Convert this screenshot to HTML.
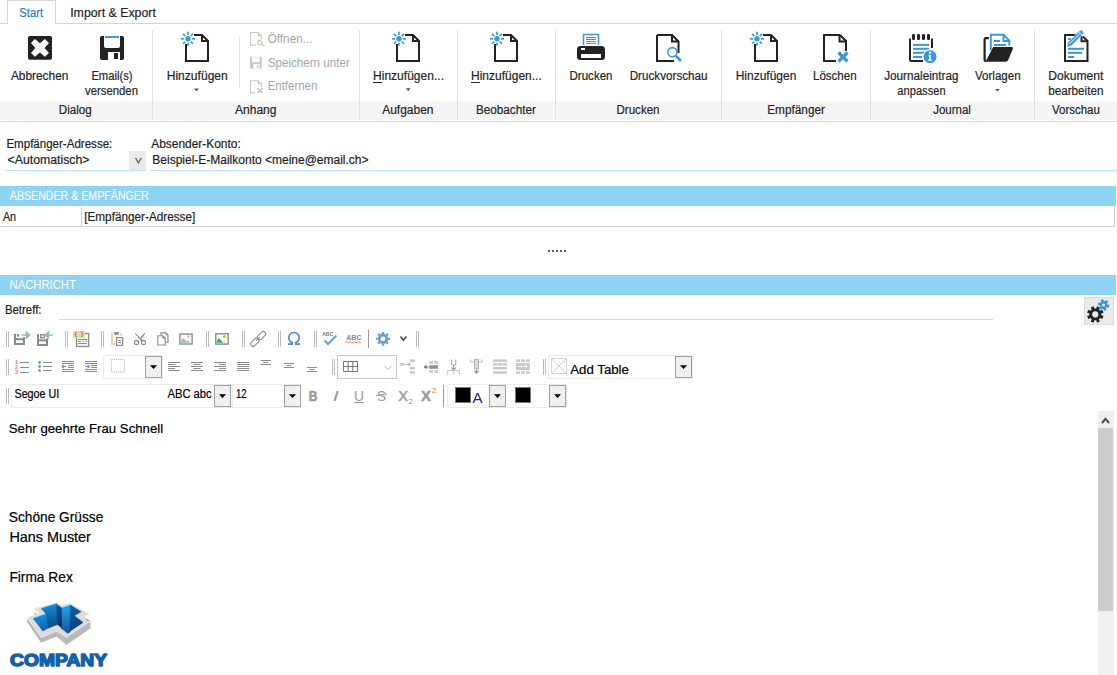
<!DOCTYPE html>
<html><head><meta charset="utf-8"><style>
html,body{margin:0;padding:0;background:#fff;overflow:hidden;}
svg{display:block;font-family:"Liberation Sans", sans-serif;}
</style></head><body>
<svg width="1117" height="675" viewBox="0 0 1117 675">
<line x1="0" y1="23.5" x2="7" y2="23.5" stroke="#d4d4d4" stroke-width="1"/>
<path d="M7.5 24 V0.5 H55.5 V24" fill="none" stroke="#d4d4d4"/>
<line x1="55" y1="23.5" x2="1117" y2="23.5" stroke="#d4d4d4" stroke-width="1"/>
<text x="19.3" y="17" font-size="12" fill="#2377d6" font-weight="normal" textLength="23.7" lengthAdjust="spacingAndGlyphs" stroke="#2377d6" stroke-width="0.15">Start</text>
<text x="70.2" y="17" font-size="12" fill="#262626" font-weight="normal" stroke="#262626" stroke-width="0.2" textLength="85.7" lengthAdjust="spacingAndGlyphs">Import &amp; Export</text>
<rect x="0" y="101" width="1117" height="19" fill="#f5f5f5"/>
<line x1="0" y1="121.5" x2="1117" y2="121.5" stroke="#d4d4d4" stroke-width="1"/>
<line x1="152.5" y1="30" x2="152.5" y2="120" stroke="#e1e1e1" stroke-width="1"/>
<line x1="359.5" y1="30" x2="359.5" y2="120" stroke="#e1e1e1" stroke-width="1"/>
<line x1="457.5" y1="30" x2="457.5" y2="120" stroke="#e1e1e1" stroke-width="1"/>
<line x1="555.5" y1="30" x2="555.5" y2="120" stroke="#e1e1e1" stroke-width="1"/>
<line x1="721.5" y1="30" x2="721.5" y2="120" stroke="#e1e1e1" stroke-width="1"/>
<line x1="870.5" y1="30" x2="870.5" y2="120" stroke="#e1e1e1" stroke-width="1"/>
<line x1="1034.5" y1="30" x2="1034.5" y2="120" stroke="#e1e1e1" stroke-width="1"/>
<line x1="239.5" y1="37" x2="239.5" y2="88" stroke="#e1e1e1" stroke-width="1"/>
<rect x="28" y="36" width="24" height="23.8" rx="1.8" fill="#222222"/>
<polygon points="31,42.9 34.9,39 39.9,43.3 44.9,39 48.9,42.9 44.6,47.9 48.9,52.9 44.9,56.8 39.9,52.5 34.9,56.8 31,52.9 35.3,47.9" fill="#fff"/>
<path d="M100 38 Q100 36 102 36 H122 Q124 36 124 38 V58 Q124 60 122 60 H102 Q100 60 100 58 Z" fill="#222222"/>
<path d="M104 36 H120 V46 Q120 48 118 48 H106 Q104 48 104 46 Z" fill="#fff"/>
<rect x="105" y="36" width="14" height="2" fill="#3a98d8"/>
<rect x="108" y="52" width="12" height="8" fill="#fff"/>
<rect x="114" y="53" width="4" height="6" fill="#222222"/>
<path d="M194 35 H202 L208 41 V61 H186 V44" fill="none" stroke="#222222" stroke-width="2"/>
<path d="M202 35 V41 H208" fill="none" stroke="#222222" stroke-width="2"/>
<circle cx="188" cy="38.8" r="2.7" fill="#3a98d8"/>
<line x1="191.90" y1="38.80" x2="195.00" y2="38.80" stroke="#3a98d8" stroke-width="1.7"/>
<line x1="190.76" y1="41.56" x2="192.95" y2="43.75" stroke="#3a98d8" stroke-width="1.7"/>
<line x1="188.00" y1="42.70" x2="188.00" y2="45.80" stroke="#3a98d8" stroke-width="1.7"/>
<line x1="185.24" y1="41.56" x2="183.05" y2="43.75" stroke="#3a98d8" stroke-width="1.7"/>
<line x1="184.10" y1="38.80" x2="181.00" y2="38.80" stroke="#3a98d8" stroke-width="1.7"/>
<line x1="185.24" y1="36.04" x2="183.05" y2="33.85" stroke="#3a98d8" stroke-width="1.7"/>
<line x1="188.00" y1="34.90" x2="188.00" y2="31.80" stroke="#3a98d8" stroke-width="1.7"/>
<line x1="190.76" y1="36.04" x2="192.95" y2="33.85" stroke="#3a98d8" stroke-width="1.7"/>
<path d="M405 35 H413 L419 41 V61 H397 V44" fill="none" stroke="#222222" stroke-width="2"/>
<path d="M413 35 V41 H419" fill="none" stroke="#222222" stroke-width="2"/>
<circle cx="399" cy="38.8" r="2.7" fill="#3a98d8"/>
<line x1="402.90" y1="38.80" x2="406.00" y2="38.80" stroke="#3a98d8" stroke-width="1.7"/>
<line x1="401.76" y1="41.56" x2="403.95" y2="43.75" stroke="#3a98d8" stroke-width="1.7"/>
<line x1="399.00" y1="42.70" x2="399.00" y2="45.80" stroke="#3a98d8" stroke-width="1.7"/>
<line x1="396.24" y1="41.56" x2="394.05" y2="43.75" stroke="#3a98d8" stroke-width="1.7"/>
<line x1="395.10" y1="38.80" x2="392.00" y2="38.80" stroke="#3a98d8" stroke-width="1.7"/>
<line x1="396.24" y1="36.04" x2="394.05" y2="33.85" stroke="#3a98d8" stroke-width="1.7"/>
<line x1="399.00" y1="34.90" x2="399.00" y2="31.80" stroke="#3a98d8" stroke-width="1.7"/>
<line x1="401.76" y1="36.04" x2="403.95" y2="33.85" stroke="#3a98d8" stroke-width="1.7"/>
<path d="M503 35 H511 L517 41 V61 H495 V44" fill="none" stroke="#222222" stroke-width="2"/>
<path d="M511 35 V41 H517" fill="none" stroke="#222222" stroke-width="2"/>
<circle cx="497" cy="38.8" r="2.7" fill="#3a98d8"/>
<line x1="500.90" y1="38.80" x2="504.00" y2="38.80" stroke="#3a98d8" stroke-width="1.7"/>
<line x1="499.76" y1="41.56" x2="501.95" y2="43.75" stroke="#3a98d8" stroke-width="1.7"/>
<line x1="497.00" y1="42.70" x2="497.00" y2="45.80" stroke="#3a98d8" stroke-width="1.7"/>
<line x1="494.24" y1="41.56" x2="492.05" y2="43.75" stroke="#3a98d8" stroke-width="1.7"/>
<line x1="493.10" y1="38.80" x2="490.00" y2="38.80" stroke="#3a98d8" stroke-width="1.7"/>
<line x1="494.24" y1="36.04" x2="492.05" y2="33.85" stroke="#3a98d8" stroke-width="1.7"/>
<line x1="497.00" y1="34.90" x2="497.00" y2="31.80" stroke="#3a98d8" stroke-width="1.7"/>
<line x1="499.76" y1="36.04" x2="501.95" y2="33.85" stroke="#3a98d8" stroke-width="1.7"/>
<path d="M763 35 H771 L777 41 V61 H755 V44" fill="none" stroke="#222222" stroke-width="2"/>
<path d="M771 35 V41 H777" fill="none" stroke="#222222" stroke-width="2"/>
<circle cx="757" cy="38.8" r="2.7" fill="#3a98d8"/>
<line x1="760.90" y1="38.80" x2="764.00" y2="38.80" stroke="#3a98d8" stroke-width="1.7"/>
<line x1="759.76" y1="41.56" x2="761.95" y2="43.75" stroke="#3a98d8" stroke-width="1.7"/>
<line x1="757.00" y1="42.70" x2="757.00" y2="45.80" stroke="#3a98d8" stroke-width="1.7"/>
<line x1="754.24" y1="41.56" x2="752.05" y2="43.75" stroke="#3a98d8" stroke-width="1.7"/>
<line x1="753.10" y1="38.80" x2="750.00" y2="38.80" stroke="#3a98d8" stroke-width="1.7"/>
<line x1="754.24" y1="36.04" x2="752.05" y2="33.85" stroke="#3a98d8" stroke-width="1.7"/>
<line x1="757.00" y1="34.90" x2="757.00" y2="31.80" stroke="#3a98d8" stroke-width="1.7"/>
<line x1="759.76" y1="36.04" x2="761.95" y2="33.85" stroke="#3a98d8" stroke-width="1.7"/>
<text x="10.9" y="80" font-size="12" fill="#262626" font-weight="normal" stroke="#262626" stroke-width="0.2" textLength="57.5" lengthAdjust="spacingAndGlyphs">Abbrechen</text>
<text x="91.4" y="80" font-size="12" fill="#262626" font-weight="normal" stroke="#262626" stroke-width="0.2" textLength="41.1" lengthAdjust="spacingAndGlyphs">Email(s)</text>
<text x="85" y="95" font-size="12" fill="#262626" font-weight="normal" stroke="#262626" stroke-width="0.2" textLength="53.0" lengthAdjust="spacingAndGlyphs">versenden</text>
<text x="166.7" y="79.5" font-size="12" fill="#262626" font-weight="normal" stroke="#262626" stroke-width="0.2" textLength="61.1" lengthAdjust="spacingAndGlyphs">Hinzufügen</text>
<path d="M194.0 88.5 H199.0 L196.5 91.2 Z" fill="#555"/>
<path d="M256 45.1 H250.6 V32.5 H258.2 L261.3 35.6 V39.5" fill="none" stroke="#c8c8c8" stroke-width="1.1"/>
<path d="M258.2 32.5 V35.6 H261.3" fill="none" stroke="#c8c8c8" stroke-width="1.1"/>
<circle cx="259.7" cy="42.5" r="2.1" fill="#fff" stroke="#c8c8c8" stroke-width="1.1"/>
<line x1="261.2" y1="44" x2="263.6" y2="46.4" stroke="#c8c8c8" stroke-width="1.3"/>
<text x="267.7" y="42.5" font-size="12" fill="#a6a6a6" font-weight="normal" textLength="44.8" lengthAdjust="spacingAndGlyphs">Öffnen...</text>
<path d="M250.1 56.8 H261.8 V68.5 H250.1 Z" fill="#c8c8c8"/>
<rect x="252" y="56.8" width="7.7" height="5.4" fill="#fff"/>
<rect x="253" y="57.5" width="5.7" height="0.8" fill="#e4e4e4"/>
<rect x="253.3" y="64.1" width="6.4" height="4.4" fill="#fff"/>
<rect x="257" y="65.1" width="1.5" height="2.5" fill="#c8c8c8"/>
<text x="267.7" y="66.5" font-size="12" fill="#a6a6a6" font-weight="normal" textLength="82.1" lengthAdjust="spacingAndGlyphs">Speichern unter</text>
<path d="M255.5 92.9 H250.6 V80.7 H258.2 L261.3 83.8 V87" fill="none" stroke="#c8c8c8" stroke-width="1.1"/>
<path d="M258.2 80.7 V83.8 H261.3" fill="none" stroke="#c8c8c8" stroke-width="1.1"/>
<path d="M257.4 88.1 L262.5 92.9 M262.5 88.1 L257.4 92.9" stroke="#c8c8c8" stroke-width="1.8"/>
<text x="267.7" y="90.3" font-size="12" fill="#a6a6a6" font-weight="normal" textLength="49.6" lengthAdjust="spacingAndGlyphs">Entfernen</text>
<text x="373" y="80" font-size="12" fill="#262626" font-weight="normal" stroke="#262626" stroke-width="0.2" textLength="71.0" lengthAdjust="spacingAndGlyphs">Hinzufügen...</text>
<line x1="373" y1="82.5" x2="382" y2="82.5" stroke="#262626" stroke-width="1"/>
<path d="M405.7 88.2 H410.7 L408.2 90.9 Z" fill="#555"/>
<text x="471" y="80" font-size="12" fill="#262626" font-weight="normal" stroke="#262626" stroke-width="0.2" textLength="70.8" lengthAdjust="spacingAndGlyphs">Hinzufügen...</text>
<line x1="471" y1="82.5" x2="480" y2="82.5" stroke="#262626" stroke-width="1"/>
<path d="M583.5 45 V34.5 H598.5 V45" fill="none" stroke="#3a98d8" stroke-width="1.5"/>
<line x1="586" y1="37.5" x2="596" y2="37.5" stroke="#3a98d8" stroke-width="1"/>
<line x1="586" y1="39.5" x2="596" y2="39.5" stroke="#3a98d8" stroke-width="1"/>
<line x1="586" y1="41.5" x2="596" y2="41.5" stroke="#3a98d8" stroke-width="1"/>
<line x1="586" y1="43.5" x2="596" y2="43.5" stroke="#3a98d8" stroke-width="1"/>
<rect x="577" y="46" width="28" height="14" rx="3.5" fill="#222222"/>
<rect x="581" y="54" width="20" height="4" fill="#fff"/>
<rect x="581" y="48" width="4" height="2" fill="#fff"/>
<path d="M657 35 H672 L678.5 41.5 V53 M674 61 H657 V35" fill="none" stroke="#222222" stroke-width="2"/>
<path d="M672 35 V41.5 H678.5" fill="none" stroke="#222222" stroke-width="2"/>
<circle cx="672.4" cy="52.2" r="4.6" fill="#fff" stroke="#3a98d8" stroke-width="1.6"/>
<line x1="676" y1="56" x2="681" y2="61" stroke="#3a98d8" stroke-width="2.6"/>
<text x="569.5" y="80" font-size="12" fill="#262626" font-weight="normal" stroke="#262626" stroke-width="0.2" textLength="43.0" lengthAdjust="spacingAndGlyphs">Drucken</text>
<text x="629.7" y="80" font-size="12" fill="#262626" font-weight="normal" stroke="#262626" stroke-width="0.2" textLength="77.9" lengthAdjust="spacingAndGlyphs">Druckvorschau</text>
<text x="735.7" y="80" font-size="12" fill="#262626" font-weight="normal" stroke="#262626" stroke-width="0.2" textLength="60.7" lengthAdjust="spacingAndGlyphs">Hinzufügen</text>
<path d="M840 35 L846 41 V51 M836 61 H824 V35 H840" fill="none" stroke="#222222" stroke-width="2"/>
<path d="M839.5 35 V41.5 H846" fill="none" stroke="#222222" stroke-width="2"/>
<path d="M838.5 52.5 L847.5 61.5 M847.5 52.5 L838.5 61.5" stroke="#3a98d8" stroke-width="3.2"/>
<text x="813" y="80" font-size="12" fill="#262626" font-weight="normal" stroke="#262626" stroke-width="0.2" textLength="43.6" lengthAdjust="spacingAndGlyphs">Löschen</text>
<path d="M910 38.5 V60 Q910 61 911 61 H923 M932 48 V38.5" fill="none" stroke="#222222" stroke-width="2"/>
<rect x="912" y="34" width="3" height="6" rx="1.2" fill="#222222"/>
<rect x="917" y="34" width="3" height="6" rx="1.2" fill="#222222"/>
<rect x="922" y="34" width="3" height="6" rx="1.2" fill="#222222"/>
<rect x="927" y="34" width="3" height="6" rx="1.2" fill="#222222"/>
<rect x="913" y="43.9" width="16" height="2" fill="#3a98d8"/>
<rect x="913" y="47.8" width="16" height="2" fill="#3a98d8"/>
<rect x="913" y="51.8" width="12" height="2" fill="#3a98d8"/>
<rect x="913" y="56" width="9" height="2" fill="#3a98d8"/>
<circle cx="930" cy="56.7" r="7" fill="#3a98d8" stroke="#fff" stroke-width="1"/>
<circle cx="930" cy="52.8" r="1.2" fill="#fff"/>
<path d="M928.6 55 H930.8 V59.5 H931.8 V60.8 H928.2 V59.5 H929.2 V56.3 H928.6 Z" fill="#fff"/>
<text x="884.2" y="79.5" font-size="12" fill="#262626" font-weight="normal" stroke="#262626" stroke-width="0.2" textLength="74.3" lengthAdjust="spacingAndGlyphs">Journaleintrag</text>
<text x="897.3" y="94.5" font-size="12" fill="#262626" font-weight="normal" stroke="#262626" stroke-width="0.2" textLength="48.3" lengthAdjust="spacingAndGlyphs">anpassen</text>
<path d="M988.8 38.2 H986 Q984.6 38.2 984.6 39.6 V59.8 Q984.6 61 986.5 61" fill="none" stroke="#222222" stroke-width="2.2"/>
<path d="M990.8 50.5 V34.8 H1003.5 L1009.3 40.6 V45.5" fill="none" stroke="#3a98d8" stroke-width="1.9"/>
<path d="M1003.5 34.8 V41 H1009.3" fill="none" stroke="#3a98d8" stroke-width="1.9"/>
<rect x="994" y="40" width="6" height="2" fill="#3a98d8"/>
<rect x="994" y="44" width="12" height="2" fill="#3a98d8"/>
<path d="M993.2 47 H1011.8 Q1013.6 47 1012.9 48.8 L1008.2 60 Q1007.5 61.8 1005.5 61.8 H987.2 Q985.6 61.8 986.3 60.2 Z" fill="#222222"/>
<text x="975" y="79.5" font-size="12" fill="#262626" font-weight="normal" stroke="#262626" stroke-width="0.2" textLength="45.6" lengthAdjust="spacingAndGlyphs">Vorlagen</text>
<path d="M994.9 88.9 H999.9 L997.4 91.60000000000001 Z" fill="#555"/>
<path d="M1077 34.9 H1065 V61 H1087.5 V41 L1083 36.5" fill="none" stroke="#222222" stroke-width="2"/>
<path d="M1081.5 36 V41.3 H1087.5" fill="none" stroke="#222222" stroke-width="2"/>
<rect x="1068" y="47.8" width="16" height="2" fill="#3a98d8"/>
<rect x="1068" y="51.8" width="14" height="2" fill="#3a98d8"/>
<rect x="1068" y="56" width="6" height="2" fill="#3a98d8"/>
<rect x="1068" y="38" width="3" height="2" fill="#3a98d8"/>
<path d="M1066.8 47.2 L1067.8 42.6 L1079.6 30.8 Q1081.3 29.3 1082.9 30.9 Q1084.5 32.5 1083 34.2 L1071.3 46 Z" fill="#3a98d8" stroke="#fff" stroke-width="0.6"/>
<path d="M1069.3 44.2 L1080.6 32.9" stroke="#fff" stroke-width="0.9"/>
<path d="M1078.6 31.6 L1082 35" stroke="#fff" stroke-width="0.7"/>
<text x="1048.2" y="79.5" font-size="12" fill="#262626" font-weight="normal" stroke="#262626" stroke-width="0.2" textLength="55.2" lengthAdjust="spacingAndGlyphs">Dokument</text>
<text x="1048.2" y="94.5" font-size="12" fill="#262626" font-weight="normal" stroke="#262626" stroke-width="0.2" textLength="55.2" lengthAdjust="spacingAndGlyphs">bearbeiten</text>
<text x="58.8" y="113.5" font-size="12" fill="#262626" font-weight="normal" stroke="#262626" stroke-width="0.2" textLength="33.0" lengthAdjust="spacingAndGlyphs">Dialog</text>
<text x="235" y="113.5" font-size="12" fill="#262626" font-weight="normal" stroke="#262626" stroke-width="0.2" textLength="41.5" lengthAdjust="spacingAndGlyphs">Anhang</text>
<text x="382.2" y="113.5" font-size="12" fill="#262626" font-weight="normal" stroke="#262626" stroke-width="0.2" textLength="51.3" lengthAdjust="spacingAndGlyphs">Aufgaben</text>
<text x="476" y="113.5" font-size="12" fill="#262626" font-weight="normal" stroke="#262626" stroke-width="0.2" textLength="59.8" lengthAdjust="spacingAndGlyphs">Beobachter</text>
<text x="616.5" y="113.5" font-size="12" fill="#262626" font-weight="normal" stroke="#262626" stroke-width="0.2" textLength="43.0" lengthAdjust="spacingAndGlyphs">Drucken</text>
<text x="767.2" y="113.5" font-size="12" fill="#262626" font-weight="normal" stroke="#262626" stroke-width="0.2" textLength="57.8" lengthAdjust="spacingAndGlyphs">Empfänger</text>
<text x="933.2" y="113.5" font-size="12" fill="#262626" font-weight="normal" stroke="#262626" stroke-width="0.2" textLength="37.7" lengthAdjust="spacingAndGlyphs">Journal</text>
<text x="1052" y="113.5" font-size="12" fill="#262626" font-weight="normal" stroke="#262626" stroke-width="0.2" textLength="47.8" lengthAdjust="spacingAndGlyphs">Vorschau</text>
<text x="6.4" y="148" font-size="12" fill="#1e1e1e" font-weight="normal" stroke="#1e1e1e" stroke-width="0.2" textLength="105.9" lengthAdjust="spacingAndGlyphs">Empfänger-Adresse:</text>
<text x="7.6" y="164" font-size="12" fill="#1e1e1e" font-weight="normal" stroke="#1e1e1e" stroke-width="0.2" textLength="81.9" lengthAdjust="spacingAndGlyphs">&lt;Automatisch&gt;</text>
<rect x="129" y="151" width="17" height="19" fill="#eaeaea"/>
<polygon points="134.8,157.9 136.5,157.9 138.4,161.4 140.3,157.9 142,157.9 138.4,164.3" fill="#707070"/>
<line x1="6" y1="170.5" x2="146" y2="170.5" stroke="#bde3f6" stroke-width="1"/>
<text x="151.2" y="148" font-size="12" fill="#1e1e1e" font-weight="normal" stroke="#1e1e1e" stroke-width="0.2" textLength="89.6" lengthAdjust="spacingAndGlyphs">Absender-Konto:</text>
<text x="152.3" y="163.5" font-size="12" fill="#1e1e1e" font-weight="normal" stroke="#1e1e1e" stroke-width="0.2" textLength="216.2" lengthAdjust="spacingAndGlyphs">Beispiel-E-Mailkonto &lt;meine@email.ch&gt;</text>
<line x1="151" y1="170.5" x2="1117" y2="170.5" stroke="#bde3f6" stroke-width="1"/>
<rect x="0" y="186" width="1116" height="20" fill="#8fd3f2"/>
<text x="9.8" y="200" font-size="12" fill="#ffffff" font-weight="normal" textLength="138.8" lengthAdjust="spacingAndGlyphs">ABSENDER &amp; EMPFÄNGER</text>
<path d="M1114.5 206 V226.5 H0" fill="none" stroke="#d0d0d0"/>
<line x1="81.5" y1="207" x2="81.5" y2="226" stroke="#d0d0d0" stroke-width="1"/>
<text x="2.9" y="221" font-size="12" fill="#1e1e1e" font-weight="normal" stroke="#1e1e1e" stroke-width="0.2" textLength="13.2" lengthAdjust="spacingAndGlyphs">An</text>
<text x="84.2" y="221" font-size="12" fill="#1e1e1e" font-weight="normal" stroke="#1e1e1e" stroke-width="0.2" textLength="111.1" lengthAdjust="spacingAndGlyphs">[Empfänger-Adresse]</text>
<rect x="548" y="250" width="2" height="2" fill="#606060"/>
<rect x="552" y="250" width="2" height="2" fill="#606060"/>
<rect x="556" y="250" width="2" height="2" fill="#606060"/>
<rect x="560" y="250" width="2" height="2" fill="#606060"/>
<rect x="564" y="250" width="2" height="2" fill="#606060"/>
<rect x="0" y="275" width="1116" height="20" fill="#8fd3f2"/>
<text x="9.5" y="289" font-size="12" fill="#ffffff" font-weight="normal" textLength="66.4" lengthAdjust="spacingAndGlyphs">NACHRICHT</text>
<text x="4.9" y="313.7" font-size="12" fill="#1e1e1e" font-weight="normal" stroke="#1e1e1e" stroke-width="0.2" textLength="36.6" lengthAdjust="spacingAndGlyphs">Betreff:</text>
<line x1="59" y1="319.5" x2="993" y2="319.5" stroke="#bde3f6" stroke-width="1"/>
<rect x="1084.5" y="297.5" width="29" height="27" fill="#ebebeb" stroke="#dcdcdc"/>
<polygon points="1103.53,316.10 1102.32,319.01 1100.15,317.93 1098.83,319.25 1099.91,321.42 1097.00,322.63 1096.24,320.33 1094.36,320.33 1093.60,322.63 1090.69,321.42 1091.77,319.25 1090.45,317.93 1088.28,319.01 1087.07,316.10 1089.37,315.34 1089.37,313.46 1087.07,312.70 1088.28,309.79 1090.45,310.87 1091.77,309.55 1090.69,307.38 1093.60,306.17 1094.36,308.47 1096.24,308.47 1097.00,306.17 1099.91,307.38 1098.83,309.55 1100.15,310.87 1102.32,309.79 1103.53,312.70 1101.23,313.46 1101.23,315.34" fill="#222222"/>
<circle cx="1095.3" cy="314.4" r="3.1" fill="#ebebeb"/>
<polygon points="1100.56,300.06 1103.32,299.21 1103.66,301.00 1105.28,301.37 1106.36,299.90 1108.48,301.86 1107.09,303.05 1107.58,304.64 1109.40,304.84 1108.76,307.65 1107.04,307.05 1105.91,308.27 1106.64,309.94 1103.88,310.79 1103.54,309.00 1101.92,308.63 1100.84,310.10 1098.72,308.14 1100.11,306.95 1099.62,305.36 1097.80,305.16 1098.44,302.35 1100.16,302.95 1101.29,301.73" fill="#3a98d8"/>
<circle cx="1103.6" cy="305" r="1.6" fill="#ebebeb"/>
<line x1="6.5" y1="331" x2="6.5" y2="347" stroke="#bdbdbd" stroke-width="1"/>
<line x1="8.5" y1="331" x2="8.5" y2="347" stroke="#bdbdbd" stroke-width="1"/>
<rect x="14" y="334" width="2" height="11" fill="#8c8c8c"/>
<rect x="14" y="343" width="11" height="2" fill="#8c8c8c"/>
<rect x="23" y="337" width="2" height="8" fill="#8c8c8c"/>
<rect x="14" y="338.2" width="11" height="2" fill="#8c8c8c"/>
<rect x="17" y="334" width="2" height="2.6" fill="#8c8c8c"/>
<path d="M22 335 H27 M26.5 332.2 L29.6 335 L26.5 337.8 Z" fill="#8fbfaa" stroke="#8fbfaa" stroke-width="1.6" stroke-linejoin="miter"/>
<rect x="37" y="334" width="2" height="12" fill="#8c8c8c"/>
<rect x="37" y="344" width="11" height="2" fill="#8c8c8c"/>
<rect x="46" y="338.3" width="2" height="7.699999999999989" fill="#8c8c8c"/>
<rect x="37" y="339.3" width="11" height="2" fill="#8c8c8c"/>
<rect x="40.7" y="334.7" width="3.6" height="3" fill="none" stroke="#8c8c8c" stroke-width="1.4"/>
<path d="M47 335 H52.8 M48.4 332.2 L45.4 335 L48.4 337.8 Z" fill="#8fbfaa" stroke="#8fbfaa" stroke-width="1.6"/>
<line x1="65.5" y1="331" x2="65.5" y2="347" stroke="#bdbdbd" stroke-width="1"/>
<line x1="67.5" y1="331" x2="67.5" y2="347" stroke="#bdbdbd" stroke-width="1"/>
<rect x="76.6" y="333.5" width="12" height="13" fill="#fff" stroke="#8c8c8c" stroke-width="1.3"/>
<rect x="73" y="331" width="12" height="7" fill="#f0d4a0"/>
<path d="M76.8 332.3 Q75.6 332.3 75.6 333.5 V334.2 L75 334.5 L75.6 334.8 V335.6 Q75.6 336.8 76.8 336.8 M81 332.3 Q82.2 332.3 82.2 333.5 V334.2 L82.8 334.5 L82.2 334.8 V335.6 Q82.2 336.8 81 336.8" fill="none" stroke="#8a8a8a" stroke-width="1.1"/>
<line x1="78" y1="339.5" x2="87" y2="339.5" stroke="#8c8c8c" stroke-width="1.1"/>
<line x1="78" y1="341.5" x2="80.7" y2="341.5" stroke="#8c8c8c" stroke-width="1.1"/>
<line x1="82" y1="341.5" x2="87" y2="341.5" stroke="#e8b870" stroke-width="1.1"/>
<line x1="78" y1="343.6" x2="87" y2="343.6" stroke="#8c8c8c" stroke-width="1.1"/>
<line x1="101.5" y1="331" x2="101.5" y2="347" stroke="#bdbdbd" stroke-width="1"/>
<line x1="103.5" y1="331" x2="103.5" y2="347" stroke="#bdbdbd" stroke-width="1"/>
<rect x="111" y="333" width="2" height="12" fill="#f0d4a0"/>
<rect x="111" y="343" width="4" height="2" fill="#f0d4a0"/>
<rect x="114" y="332" width="5" height="2.8" rx="1" fill="#8c8c8c"/>
<rect x="120.3" y="333" width="1.7" height="2.8" fill="#f0d4a0"/>
<rect x="116.6" y="337.6" width="6" height="7.8" fill="#fff" stroke="#8c8c8c" stroke-width="1.2"/>
<line x1="118" y1="340.5" x2="121" y2="340.5" stroke="#8c8c8c" stroke-width="1"/>
<line x1="118" y1="342.5" x2="121" y2="342.5" stroke="#8c8c8c" stroke-width="1"/>
<circle cx="136.6" cy="342.5" r="2.1" fill="none" stroke="#8c8c8c" stroke-width="1.1"/>
<circle cx="143.5" cy="342.5" r="2.1" fill="none" stroke="#8c8c8c" stroke-width="1.1"/>
<path d="M135.2 333.3 L143.2 340.8 L141.6 341.2 Z" fill="#8c8c8c" stroke="#8c8c8c" stroke-width="0.8"/>
<path d="M144.8 333.3 L141.8 338.2 L141 337 Z" fill="#8c8c8c" stroke="#8c8c8c" stroke-width="0.8"/>
<path d="M160.9 335 V332.9 H166 L168 334.9 V342.2 H165.5" fill="#fff" stroke="#8c8c8c" stroke-width="1.1"/>
<path d="M157.8 335.7 H162.8 L165.2 338.1 V345 H157.8 Z" fill="#fff" stroke="#8c8c8c" stroke-width="1.1"/>
<path d="M162.4 335.7 V338.6 H165.2 Z" fill="#8c8c8c"/>
<path d="M165.7 333 V335.3 H168 Z" fill="#8c8c8c"/>
<rect x="179.9" y="334" width="12.2" height="10" fill="#fff" stroke="#8c8c8c" stroke-width="1.4"/>
<path d="M181 342.8 V341 L183 338 L186.7 341.5 L188 340.2 L190.2 342.8 Z" fill="#9cc4b0"/>
<circle cx="188.4" cy="336.6" r="1.4" fill="#eac48a"/>
<line x1="206.5" y1="331" x2="206.5" y2="347" stroke="#bdbdbd" stroke-width="1"/>
<line x1="208.5" y1="331" x2="208.5" y2="347" stroke="#bdbdbd" stroke-width="1"/>
<rect x="215.8" y="333.8" width="12.4" height="10.3" fill="#fff" stroke="#8c8c8c" stroke-width="1.4"/>
<path d="M217 342.8 V340.5 L218.9 338 L223.2 342.8 Z" fill="#3cb054"/>
<path d="M223.2 340.8 L226 342.6 L223.8 342.6 Z" fill="#9cc4b0"/>
<circle cx="224.5" cy="336.5" r="1.6" fill="#f5b030"/>
<line x1="242.5" y1="331" x2="242.5" y2="347" stroke="#bdbdbd" stroke-width="1"/>
<line x1="244.5" y1="331" x2="244.5" y2="347" stroke="#bdbdbd" stroke-width="1"/>
<g transform="rotate(-45 258.1 339)" fill="none" stroke="#8c8c8c" stroke-width="1.1"><rect x="248.6" y="336.6" width="9.6" height="4.8" rx="2.4"/><rect x="258" y="336.6" width="9.6" height="4.8" rx="2.4"/><line x1="255.5" y1="339" x2="260.7" y2="339"/></g>
<line x1="278.5" y1="331" x2="278.5" y2="347" stroke="#bdbdbd" stroke-width="1"/>
<line x1="280.5" y1="331" x2="280.5" y2="347" stroke="#bdbdbd" stroke-width="1"/>
<path d="M288 344.2 H292.2 V342.6 A5.2 5.2 0 1 1 295.8 342.6 V344.2 H300" fill="none" stroke="#4f8fd0" stroke-width="1.7"/>
<line x1="314.5" y1="331" x2="314.5" y2="347" stroke="#bdbdbd" stroke-width="1"/>
<line x1="316.5" y1="331" x2="316.5" y2="347" stroke="#bdbdbd" stroke-width="1"/>
<text x="322.3" y="335.8" font-size="4.8" fill="#777" font-weight="bold" textLength="10.7" lengthAdjust="spacingAndGlyphs">ABC</text>
<path d="M324.6 340.5 L328 344 L336.4 335.6" fill="none" stroke="#6fa0d8" stroke-width="2.1"/>
<text x="346.2" y="340" font-size="7" fill="#888" font-weight="bold" textLength="15.3" lengthAdjust="spacingAndGlyphs">ABC</text>
<path d="M345.2 342.3 q1 -1 2 0 t2 0 t2 0 t2 0 t2 0 t2 0 t2 0 t2 0" fill="none" stroke="#e07050" stroke-width="0.9"/>
<line x1="368.5" y1="329.5" x2="368.5" y2="348" stroke="#9a9a9a" stroke-width="1"/>
<polygon points="389.89,337.57 389.89,340.03 388.07,339.95 387.40,341.57 388.74,342.80 387.00,344.54 385.77,343.20 384.15,343.87 384.23,345.69 381.77,345.69 381.85,343.87 380.23,343.20 379.00,344.54 377.26,342.80 378.60,341.57 377.93,339.95 376.11,340.03 376.11,337.57 377.93,337.65 378.60,336.03 377.26,334.80 379.00,333.06 380.23,334.40 381.85,333.73 381.77,331.91 384.23,331.91 384.15,333.73 385.77,334.40 387.00,333.06 388.74,334.80 387.40,336.03 388.07,337.65" fill="#6f9fd5"/>
<circle cx="383" cy="338.8" r="2.4" fill="#fff"/>
<path d="M400.5 336.5 L403.5 340 L406.5 336.5" fill="none" stroke="#555" stroke-width="1.8"/>
<line x1="416.5" y1="331" x2="416.5" y2="347" stroke="#bdbdbd" stroke-width="1"/>
<line x1="418.5" y1="331" x2="418.5" y2="347" stroke="#bdbdbd" stroke-width="1"/>
<line x1="6.5" y1="359" x2="6.5" y2="375" stroke="#bdbdbd" stroke-width="1"/>
<line x1="8.5" y1="359" x2="8.5" y2="375" stroke="#bdbdbd" stroke-width="1"/>
<text x="14.9" y="364" font-size="5.3" fill="#e8735a" font-weight="bold">1</text>
<text x="14.9" y="368.8" font-size="5.3" fill="#e8735a" font-weight="bold">2</text>
<text x="14.9" y="374" font-size="5.3" fill="#e8735a" font-weight="bold">3</text>
<line x1="20" y1="362.5" x2="29" y2="362.5" stroke="#8c8c8c" stroke-width="1"/>
<line x1="20" y1="367.5" x2="29" y2="367.5" stroke="#8c8c8c" stroke-width="1"/>
<line x1="20" y1="372.5" x2="29" y2="372.5" stroke="#8c8c8c" stroke-width="1"/>
<circle cx="39.6" cy="362.5" r="1.4" fill="#6c9ad0"/>
<line x1="43" y1="362.5" x2="52" y2="362.5" stroke="#8c8c8c" stroke-width="1"/>
<circle cx="39.6" cy="366.5" r="1.4" fill="#6c9ad0"/>
<line x1="43" y1="366.5" x2="52" y2="366.5" stroke="#8c8c8c" stroke-width="1"/>
<circle cx="39.6" cy="370.5" r="1.4" fill="#6c9ad0"/>
<line x1="43" y1="370.5" x2="52" y2="370.5" stroke="#8c8c8c" stroke-width="1"/>
<line x1="62" y1="361.5" x2="74" y2="361.5" stroke="#8c8c8c" stroke-width="1"/>
<line x1="62" y1="363.5" x2="74" y2="363.5" stroke="#8c8c8c" stroke-width="1"/>
<line x1="68" y1="365.5" x2="74" y2="365.5" stroke="#8c8c8c" stroke-width="1"/>
<line x1="68" y1="367.5" x2="74" y2="367.5" stroke="#8c8c8c" stroke-width="1"/>
<line x1="62" y1="369.5" x2="74" y2="369.5" stroke="#8c8c8c" stroke-width="1"/>
<line x1="62" y1="371.5" x2="74" y2="371.5" stroke="#8c8c8c" stroke-width="1"/>
<path d="M62 366.5 H66.5 M64 364.8 L62 366.5 L64 368.2" fill="none" stroke="#6c9ad0" stroke-width="1.2"/>
<line x1="85" y1="361.5" x2="97" y2="361.5" stroke="#8c8c8c" stroke-width="1"/>
<line x1="85" y1="363.5" x2="97" y2="363.5" stroke="#8c8c8c" stroke-width="1"/>
<line x1="91" y1="365.5" x2="97" y2="365.5" stroke="#8c8c8c" stroke-width="1"/>
<line x1="91" y1="367.5" x2="97" y2="367.5" stroke="#8c8c8c" stroke-width="1"/>
<line x1="85" y1="369.5" x2="97" y2="369.5" stroke="#8c8c8c" stroke-width="1"/>
<line x1="85" y1="371.5" x2="97" y2="371.5" stroke="#8c8c8c" stroke-width="1"/>
<path d="M85 366.5 H89.5 M87.5 364.8 L89.5 366.5 L87.5 368.2" fill="none" stroke="#6c9ad0" stroke-width="1.2"/>
<rect x="103.5" y="355.5" width="59" height="23" fill="#fff" stroke="#ececec"/>
<rect x="111.5" y="359.5" width="13" height="12.5" fill="none" stroke="#aaa" stroke-dasharray="1,1.2"/>
<rect x="145.5" y="356.5" width="16" height="21" fill="#f0f0f0" stroke="#a0a0a0"/>
<path d="M150.0 365.2 H157.0 L153.5 369.0 Z" fill="#000"/>
<line x1="168" y1="362.5" x2="180" y2="362.5" stroke="#8c8c8c" stroke-width="1"/>
<line x1="168" y1="364.5" x2="175" y2="364.5" stroke="#8c8c8c" stroke-width="1"/>
<line x1="168" y1="366.5" x2="180" y2="366.5" stroke="#8c8c8c" stroke-width="1"/>
<line x1="168" y1="368.5" x2="175" y2="368.5" stroke="#8c8c8c" stroke-width="1"/>
<line x1="168" y1="370.5" x2="180" y2="370.5" stroke="#8c8c8c" stroke-width="1"/>
<line x1="191" y1="362.5" x2="203" y2="362.5" stroke="#8c8c8c" stroke-width="1"/>
<line x1="193.5" y1="364.5" x2="200.5" y2="364.5" stroke="#8c8c8c" stroke-width="1"/>
<line x1="191" y1="366.5" x2="203" y2="366.5" stroke="#8c8c8c" stroke-width="1"/>
<line x1="193.5" y1="368.5" x2="200.5" y2="368.5" stroke="#8c8c8c" stroke-width="1"/>
<line x1="191" y1="370.5" x2="203" y2="370.5" stroke="#8c8c8c" stroke-width="1"/>
<line x1="214" y1="362.5" x2="226" y2="362.5" stroke="#8c8c8c" stroke-width="1"/>
<line x1="219" y1="364.5" x2="226" y2="364.5" stroke="#8c8c8c" stroke-width="1"/>
<line x1="214" y1="366.5" x2="226" y2="366.5" stroke="#8c8c8c" stroke-width="1"/>
<line x1="219" y1="368.5" x2="226" y2="368.5" stroke="#8c8c8c" stroke-width="1"/>
<line x1="214" y1="370.5" x2="226" y2="370.5" stroke="#8c8c8c" stroke-width="1"/>
<line x1="237" y1="362.5" x2="249" y2="362.5" stroke="#8c8c8c" stroke-width="1"/>
<line x1="237" y1="364.5" x2="249" y2="364.5" stroke="#8c8c8c" stroke-width="1"/>
<line x1="237" y1="366.5" x2="249" y2="366.5" stroke="#8c8c8c" stroke-width="1"/>
<line x1="237" y1="368.5" x2="249" y2="368.5" stroke="#8c8c8c" stroke-width="1"/>
<line x1="237" y1="370.5" x2="249" y2="370.5" stroke="#8c8c8c" stroke-width="1"/>
<line x1="260.5" y1="360.5" x2="271" y2="360.5" stroke="#8c8c8c" stroke-width="1"/>
<line x1="263" y1="362.5" x2="268.5" y2="362.5" stroke="#8c8c8c" stroke-width="1"/>
<line x1="260.5" y1="364.5" x2="271" y2="364.5" stroke="#8c8c8c" stroke-width="1"/>
<line x1="284" y1="363.5" x2="294" y2="363.5" stroke="#8c8c8c" stroke-width="1"/>
<line x1="286.5" y1="365.5" x2="291.5" y2="365.5" stroke="#8c8c8c" stroke-width="1"/>
<line x1="284" y1="367.5" x2="294" y2="367.5" stroke="#8c8c8c" stroke-width="1"/>
<line x1="307" y1="367.5" x2="317" y2="367.5" stroke="#8c8c8c" stroke-width="1"/>
<line x1="309.5" y1="369.5" x2="314.5" y2="369.5" stroke="#8c8c8c" stroke-width="1"/>
<line x1="307" y1="371.5" x2="317" y2="371.5" stroke="#8c8c8c" stroke-width="1"/>
<line x1="332.5" y1="359" x2="332.5" y2="375" stroke="#bdbdbd" stroke-width="1"/>
<line x1="334.5" y1="359" x2="334.5" y2="375" stroke="#bdbdbd" stroke-width="1"/>
<rect x="337.5" y="355.5" width="59" height="23" fill="#fff" stroke="#c8c8c8"/>
<path d="M343.5 361.5 H357.5 V371.5 H343.5 Z M343.5 366.5 H357.5 M348.2 361.5 V371.5 M352.8 361.5 V371.5" fill="none" stroke="#777" stroke-width="1"/>
<path d="M384.5 366 L388 369.5 L391.5 366" fill="none" stroke="#aaa" stroke-width="1"/>
<rect x="399.8" y="363.1" width="5" height="2.6" fill="#c8c8c8"/>
<path d="M405.5 364.4 H410 M408.5 362.9 L410.5 364.4 L408.5 365.9" fill="none" stroke="#aaa" stroke-width="1"/>
<rect x="409.8" y="359.4" width="5" height="2.5" fill="#c8c8c8"/>
<rect x="409.8" y="366.9" width="5" height="2.5" fill="#c8c8c8"/>
<rect x="409.8" y="371.3" width="5" height="2.5" fill="#c8c8c8"/>
<rect x="429.2" y="361.3" width="3.8" height="2.5" fill="#c8c8c8"/>
<rect x="434.2" y="361.3" width="3.8" height="2.5" fill="#c8c8c8"/>
<rect x="429.2" y="365.3" width="8.8" height="3.5" fill="#909090"/>
<path d="M428.6 367 H425 M426.5 365.5 L424.5 367 L426.5 368.5" fill="none" stroke="#707070" stroke-width="1.2"/>
<rect x="429.2" y="370.3" width="3.8" height="2.5" fill="#c8c8c8"/>
<rect x="434.2" y="370.3" width="3.8" height="2.5" fill="#c8c8c8"/>
<path d="M451.6 359.4 V365 H455.7 V359.4" fill="none" stroke="#b4b4b4" stroke-width="1.1"/>
<path d="M453.6 365 V369 M451.4 367.5 L453.6 370 L455.8 367.5" fill="none" stroke="#a0a0a0" stroke-width="1.2"/>
<path d="M447.3 375 V370.5 H459.4 V375 M453.6 370.5 V375" fill="none" stroke="#c8c8c8" stroke-width="1"/>
<path d="M470.4 359.4 V362 H482 V359.4" fill="none" stroke="#c0c0c0" stroke-width="1"/>
<rect x="474.6" y="359.4" width="3.8" height="9.4" fill="#ddd" stroke="#aaa" stroke-width="0.9"/>
<path d="M476.5 368.8 V372 M474.4 371 L476.5 373.8 L478.6 371 Z" fill="#a0a0a0" stroke="#a0a0a0" stroke-width="0.9"/>
<rect x="493.1" y="359.4" width="13.8" height="2.5" fill="#c8c8c8"/>
<rect x="493.1" y="363.1" width="4.4" height="2.6" fill="#c8c8c8"/>
<rect x="498.1" y="363.1" width="4.4" height="2.6" fill="#c8c8c8"/>
<rect x="503.1" y="363.1" width="3.8" height="2.6" fill="#c8c8c8"/>
<rect x="493.1" y="366.9" width="13.8" height="2.5" fill="#c8c8c8"/>
<rect x="493.1" y="371.3" width="13.8" height="2.5" fill="#c8c8c8"/>
<rect x="516" y="359.4" width="4" height="2.5" fill="#c8c8c8"/>
<rect x="516" y="371.3" width="4" height="2.5" fill="#c8c8c8"/>
<rect x="521" y="359.4" width="4" height="2.5" fill="#c8c8c8"/>
<rect x="521" y="371.3" width="4" height="2.5" fill="#c8c8c8"/>
<rect x="526" y="359.4" width="4" height="2.5" fill="#c8c8c8"/>
<rect x="526" y="371.3" width="4" height="2.5" fill="#c8c8c8"/>
<rect x="516" y="363.1" width="13.8" height="6.9" fill="#c8c8c8"/>
<path d="M518 366.5 H527 M525.3 364.8 L527.2 366.5 L525.3 368.2" fill="none" stroke="#fff" stroke-width="1"/>
<line x1="543.5" y1="359" x2="543.5" y2="375" stroke="#bdbdbd" stroke-width="1"/>
<line x1="545.5" y1="359" x2="545.5" y2="375" stroke="#bdbdbd" stroke-width="1"/>
<rect x="548.5" y="355.5" width="144" height="23" fill="#fff" stroke="#ececec"/>
<path d="M551.5 358.5 H566.5 V373.5 H551.5 Z M551.5 358.5 L566.5 373.5 M566.5 358.5 L551.5 373.5" fill="none" stroke="#d4d4d4"/>
<text x="570.3" y="373.6" font-size="13.4" fill="#000" font-weight="normal" stroke="#000" stroke-width="0.2" textLength="58.6" lengthAdjust="spacingAndGlyphs">Add Table</text>
<rect x="675.5" y="356.5" width="16" height="21" fill="#f0f0f0" stroke="#a0a0a0"/>
<path d="M680.0 365.2 H687.0 L683.5 369.0 Z" fill="#000"/>
<line x1="6.5" y1="388" x2="6.5" y2="404" stroke="#bdbdbd" stroke-width="1"/>
<line x1="8.5" y1="388" x2="8.5" y2="404" stroke="#bdbdbd" stroke-width="1"/>
<rect x="11.5" y="384.5" width="221" height="23" fill="#fff" stroke="#ececec"/>
<text x="14.5" y="397.7" font-size="12" fill="#000" font-weight="normal" stroke="#000" stroke-width="0.2" textLength="44.7" lengthAdjust="spacingAndGlyphs">Segoe UI</text>
<text x="167.5" y="398" font-size="12" fill="#000" font-weight="normal" stroke="#000" stroke-width="0.2" textLength="44.1" lengthAdjust="spacingAndGlyphs">ABC abc</text>
<rect x="214.5" y="385.5" width="16" height="21" fill="#f0f0f0" stroke="#a0a0a0"/>
<path d="M219.0 394.2 H226.0 L222.5 398.0 Z" fill="#000"/>
<rect x="232.5" y="384.5" width="68" height="23" fill="#fff" stroke="#ececec"/>
<text x="236" y="398" font-size="12" fill="#000" font-weight="normal" stroke="#000" stroke-width="0.2" textLength="10.6" lengthAdjust="spacingAndGlyphs">12</text>
<rect x="284.5" y="385.5" width="16" height="21" fill="#f0f0f0" stroke="#a0a0a0"/>
<path d="M289.0 394.2 H296.0 L292.5 398.0 Z" fill="#000"/>
<text x="308.8" y="400.5" font-size="14.5" fill="#9a9a9a" font-weight="bold" textLength="8.7" lengthAdjust="spacingAndGlyphs" stroke="#9a9a9a" stroke-width="0.5">B</text>
<text x="332.7" y="400.5" font-size="14.5" fill="#9a9a9a" font-style="italic" textLength="6" lengthAdjust="spacingAndGlyphs">I</text>
<text x="354" y="400.5" font-size="14.5" fill="#9a9a9a" font-weight="normal" textLength="10.0" lengthAdjust="spacingAndGlyphs">U</text>
<line x1="354" y1="402.5" x2="364" y2="402.5" stroke="#9a9a9a" stroke-width="1"/>
<text x="376.9" y="400.5" font-size="14.5" fill="#9a9a9a" font-weight="normal" textLength="9.0" lengthAdjust="spacingAndGlyphs">S</text>
<line x1="376" y1="395.5" x2="387" y2="394" stroke="#9a9a9a" stroke-width="1.2"/>
<text x="398.2" y="400.5" font-size="14.5" fill="#a0a0a0" font-weight="normal" textLength="9.8" lengthAdjust="spacingAndGlyphs" stroke="#a0a0a0" stroke-width="0.5">X</text>
<text x="408.4" y="403.6" font-size="7.5" fill="#4a90d0" font-weight="normal" textLength="3.9" lengthAdjust="spacingAndGlyphs">2</text>
<text x="421" y="400.5" font-size="14.5" fill="#9a9a9a" font-weight="bold" textLength="9.9" lengthAdjust="spacingAndGlyphs" stroke="#9a9a9a" stroke-width="0.5">X</text>
<text x="432" y="393" font-size="7.5" fill="#e07050" font-weight="normal" textLength="4.2" lengthAdjust="spacingAndGlyphs">2</text>
<line x1="443.5" y1="385" x2="443.5" y2="407" stroke="#9a9a9a" stroke-width="1"/>
<rect x="447.5" y="384.5" width="119" height="23" fill="#fff" stroke="#ececec"/>
<rect x="455.5" y="387.5" width="15" height="15" fill="#000" stroke="#777"/>
<text x="472.6" y="402.9" font-size="15" fill="#2020a8" font-weight="normal" textLength="10.0" lengthAdjust="spacingAndGlyphs">A</text>
<rect x="489.5" y="385.5" width="16" height="21" fill="#f0f0f0" stroke="#a0a0a0"/>
<path d="M494.0 394.2 H501.0 L497.5 398.0 Z" fill="#000"/>
<rect x="515.5" y="387.5" width="15" height="15" fill="#000" stroke="#777"/>
<rect x="549.5" y="385.5" width="16" height="21" fill="#f0f0f0" stroke="#a0a0a0"/>
<path d="M554.0 394.2 H561.0 L557.5 398.0 Z" fill="#000"/>
<text x="8.8" y="432.7" font-size="13.3" fill="#000" font-weight="normal" stroke="#000" stroke-width="0.2" textLength="154.4" lengthAdjust="spacingAndGlyphs">Sehr geehrte Frau Schnell</text>
<text x="8.8" y="521.6" font-size="14.2" fill="#000" font-weight="normal" stroke="#000" stroke-width="0.2" textLength="94.5" lengthAdjust="spacingAndGlyphs">Schöne Grüsse</text>
<text x="9.4" y="541.8" font-size="14.2" fill="#000" font-weight="normal" stroke="#000" stroke-width="0.2" textLength="81.5" lengthAdjust="spacingAndGlyphs">Hans Muster</text>
<text x="9.4" y="581.6" font-size="14.2" fill="#000" font-weight="normal" stroke="#000" stroke-width="0.2" textLength="63.4" lengthAdjust="spacingAndGlyphs">Firma Rex</text>
<rect x="1098" y="411" width="16" height="264" fill="#f0f0f0"/>
<path d="M1102 423 L1105.5 418.8 L1109 423" fill="none" stroke="#505050" stroke-width="2.1"/>
<rect x="1098" y="428" width="15" height="183" fill="#cdcdcd"/>
<defs>
<linearGradient id="g1" x1="0" y1="0" x2="0" y2="1"><stop offset="0" stop-color="#1e96dc"/><stop offset="1" stop-color="#0a5aa8"/></linearGradient>
<linearGradient id="g2" x1="0" y1="0" x2="0" y2="1"><stop offset="0" stop-color="#22a8ec"/><stop offset="1" stop-color="#0a5aa5"/></linearGradient>
<linearGradient id="g3" x1="0" y1="0" x2="0" y2="1"><stop offset="0" stop-color="#0a5fa8"/><stop offset="1" stop-color="#053a75"/></linearGradient>
</defs>
<polygon points="27.2,618 41.2,638 56.7,631.4 66.3,637.8 90.4,621.5 90.4,628.6 66.3,645 56.7,636.4 41,642.8 27.2,622.2" fill="#b9b9b9"/>
<polygon points="27.9,617.6 39.6,613.3 34,608.7 56.7,602.3 61.7,605.5 69.5,603.1 89.4,614 84.5,616.9 90.4,621 66.3,637.8 56.7,631.4 41.2,638" fill="#dddddd"/>
<polygon points="34.5,612.5 37,613.5 34.5,614.5" fill="#999"/>
<polygon points="84,618 90,620.5 88,621.5" fill="#aaa"/>
<defs>
<linearGradient id="h1" x1="0" y1="0" x2="0" y2="1"><stop offset="0" stop-color="#1894de"/><stop offset="1" stop-color="#0a62b2"/></linearGradient>
<linearGradient id="h2" x1="0" y1="0" x2="0" y2="1"><stop offset="0" stop-color="#1a8cd6"/><stop offset="1" stop-color="#05488a"/></linearGradient>
<linearGradient id="h3" x1="0" y1="0" x2="0" y2="1"><stop offset="0" stop-color="#0a5aa0"/><stop offset="1" stop-color="#032f62"/></linearGradient>
<linearGradient id="h4" x1="0" y1="0" x2="0" y2="1"><stop offset="0" stop-color="#22a6ea"/><stop offset="1" stop-color="#0a58a0"/></linearGradient>
<linearGradient id="h5" x1="0" y1="0" x2="0" y2="1"><stop offset="0" stop-color="#0c60ad"/><stop offset="1" stop-color="#053c7c"/></linearGradient>
</defs>
<polygon points="33.2,618.4 46,613.9 47.9,628.3 42.8,630.9" fill="url(#h1)" stroke="url(#h1)" stroke-width="0.5" stroke-linejoin="round"/>
<polygon points="41.2,608.5 56.1,604 57.7,624.5 47.9,628.3 46,613.9" fill="url(#h2)" stroke="url(#h2)" stroke-width="0.5" stroke-linejoin="round"/>
<polygon points="56.1,604 62,608 62.8,629.5 57.7,624.5" fill="url(#h3)" stroke="url(#h3)" stroke-width="0.5" stroke-linejoin="round"/>
<polygon points="62,608 70.3,605.1 69.8,632 67.3,633.1 62.8,629.5" fill="url(#h4)" stroke="url(#h4)" stroke-width="0.5" stroke-linejoin="round"/>
<polygon points="70.3,605.1 81.2,611.7 74.3,615.7 83.1,622.4 67.3,633.1 69.8,632" fill="url(#h5)" stroke="url(#h5)" stroke-width="0.5" stroke-linejoin="round"/>
<text x="10.1" y="665.6" font-size="17.4" fill="#1660a8" font-weight="bold" stroke="#1660a8" stroke-width="1.5" stroke-linejoin="round" textLength="97" lengthAdjust="spacingAndGlyphs">COMPANY</text>
</svg>
</body></html>
